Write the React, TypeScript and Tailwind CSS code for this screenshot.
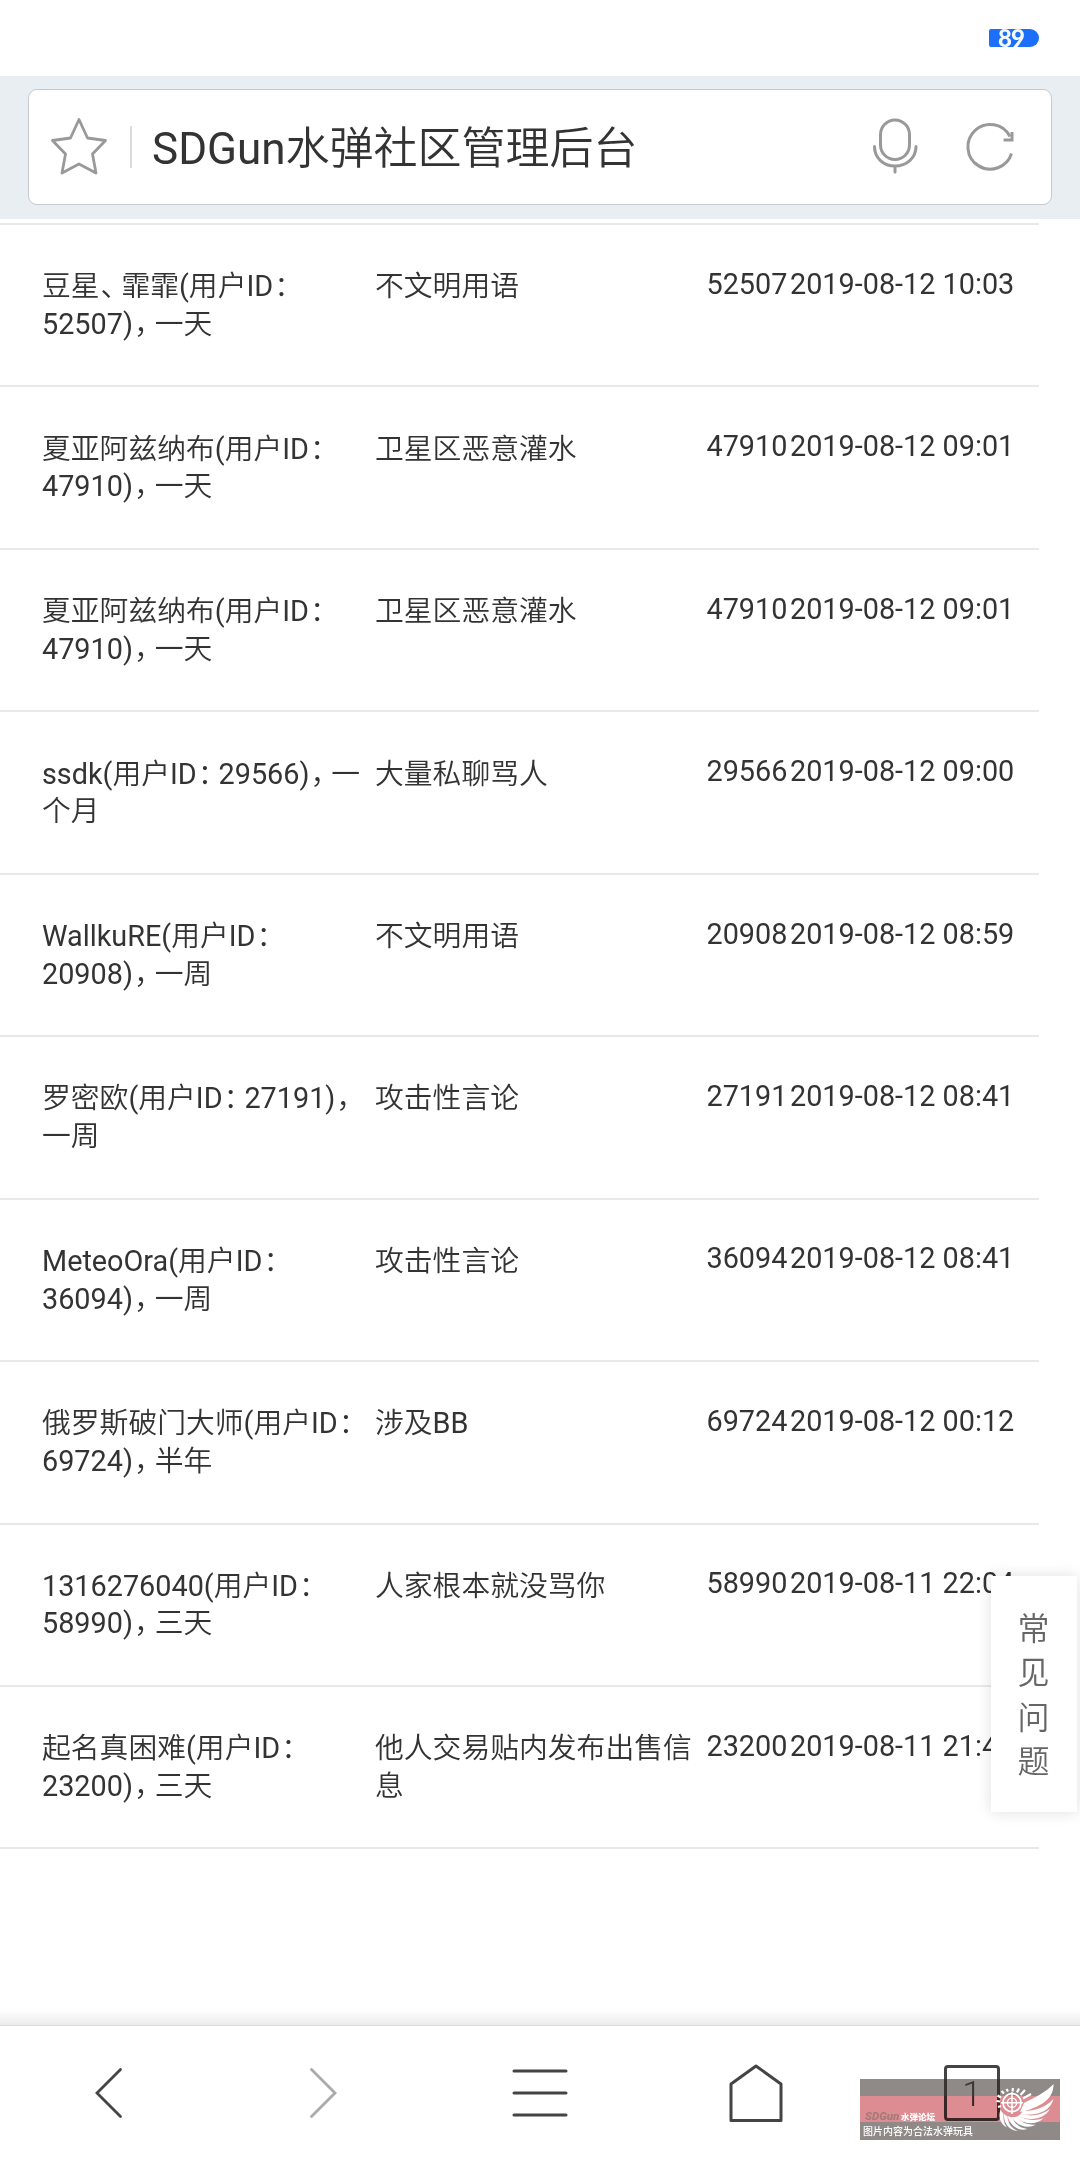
import type { ReactNode } from "react";

// =====================================================
// Ban log page inside a mobile browser shell
// =====================================================

type LogRow = {
  user: string[];
  reason: string[];
  uid: string;
  time: string;
};

const rows: LogRow[] = [
  { user: ["豆星、霏霏(用户ID：", "52507)，一天"], reason: ["不文明用语"], uid: "52507", time: "2019-08-12 10:03" },
  { user: ["夏亚阿兹纳布(用户ID：", "47910)，一天"], reason: ["卫星区恶意灌水"], uid: "47910", time: "2019-08-12 09:01" },
  { user: ["夏亚阿兹纳布(用户ID：", "47910)，一天"], reason: ["卫星区恶意灌水"], uid: "47910", time: "2019-08-12 09:01" },
  { user: ["ssdk(用户ID：29566)，一", "个月"], reason: ["大量私聊骂人"], uid: "29566", time: "2019-08-12 09:00" },
  { user: ["WallkuRE(用户ID：", "20908)，一周"], reason: ["不文明用语"], uid: "20908", time: "2019-08-12 08:59" },
  { user: ["罗密欧(用户ID：27191)，", "一周"], reason: ["攻击性言论"], uid: "27191", time: "2019-08-12 08:41" },
  { user: ["MeteoOra(用户ID：", "36094)，一周"], reason: ["攻击性言论"], uid: "36094", time: "2019-08-12 08:41" },
  { user: ["俄罗斯破门大师(用户ID：", "69724)，半年"], reason: ["涉及BB"], uid: "69724", time: "2019-08-12 00:12" },
  { user: ["1316276040(用户ID：", "58990)，三天"], reason: ["人家根本就没骂你"], uid: "58990", time: "2019-08-11 22:04" },
  { user: ["起名真困难(用户ID：", "23200)，三天"], reason: ["他人交易贴内发布出售信", "息"], uid: "23200", time: "2019-08-11 21:47" },
];

// Full-width punctuation is set tighter than the glyph's em box
function renderLine(line: string): ReactNode[] {
  return line.split(/([：，、])/).map((part, i) =>
    /^[：，、]$/.test(part) ? (
      <span key={i} className="pl-[1px] tracking-[-8px]">
        {part}
      </span>
    ) : (
      part
    )
  );
}

function StatusBar() {
  return (
    <div className="flex h-[76px] shrink-0 justify-end pt-[29px] pr-[41px]">
      <div className="flex h-[18px] w-[50px] items-center rounded-l-[2px] rounded-r-[9px] bg-[#1b6ff8] pl-[9px] font-[Lato] text-[24px] leading-[28px] font-black tracking-[-1px] text-[#f4f8ff]">
        89
      </div>
    </div>
  );
}

function AddressBar() {
  return (
    <header className="h-[143px] shrink-0 bg-[#e9eef3] px-7 pt-[13px]">
      <div className="flex h-[116px] items-center rounded-[9px] border border-[#c6c9cd] bg-white">
        <svg className="ml-[21px] h-[60px] w-[60px]" viewBox="0 0 60 60" fill="none" stroke="#999" strokeWidth="2.8" strokeLinejoin="round">
          <path d="M29 2.5 L37.5 21 L55.5 23.5 L42.5 37 L46 56 L29 47 L12 56 L15.5 37 L2.5 23.5 L20.5 21 Z" />
        </svg>
        <div className="ml-5 h-[42px] w-[2px] bg-[#dcdcdc]" />
        <h1 className="mt-[3px] ml-[20px] flex-1 text-[44px] leading-[60px] text-[#333]">SDGun水弹社区管理后台</h1>
        <svg className="mr-[44px] h-[60px] w-[50px]" viewBox="0 0 50 60" fill="none" stroke="#999" strokeWidth="3" strokeLinecap="round">
          <rect x="9.5" y="3" width="29" height="39.5" rx="14.5" />
          <path d="M3.5 29.5 C3.5 41 12.5 49 24 49 C35.5 49 45 41 45 29.5 M24 49 V55" />
        </svg>
        <svg className="mr-[32px] h-[60px] w-[54px]" viewBox="0 0 54 60" fill="none" stroke="#999" strokeWidth="3">
          <path d="M46.5 36.5 A22.3 22.3 0 1 1 45 19.5" />
          <path d="M38.5 23 H47 V15" />
        </svg>
      </div>
    </header>
  );
}

function LogTable() {
  return (
    <main className="w-[1039px] flex-1 pt-1">
      <div className="h-[2px] bg-[#e9e9e9]" />
      {rows.map((row, i) => (
        <div
          key={i}
          className="grid h-[162.45px] grid-cols-[333px_331.5px_83.5px_1fr] border-b-2 border-[#e9e9e9] pt-[43.3px] pl-[42px] text-[28.8px] leading-[37.6px] whitespace-nowrap text-[#333]"
        >
          <div>
            {row.user.map((line) => (
              <div key={line}>{renderLine(line)}</div>
            ))}
          </div>
          <div>
            {row.reason.map((line) => (
              <div key={line}>{line}</div>
            ))}
          </div>
          <div className="-mt-[2.5px]">{row.uid}</div>
          <div className="-mt-[2.5px]">{row.time}</div>
        </div>
      ))}
    </main>
  );
}

// Floating help tab pinned to the right edge
function FaqTab() {
  return (
    <button
      type="button"
      className="absolute top-[1576px] right-[3px] flex h-[236px] w-[86px] flex-col items-center justify-center bg-white pt-[3px] pr-[1px] text-[32px] leading-[44.5px] text-[#666] shadow-[0_0_14px_rgba(0,0,0,0.13)]"
    >
      {["常", "见", "问", "题"].map((ch) => (
        <span key={ch}>{ch}</span>
      ))}
    </button>
  );
}

function Watermark() {
  return (
    <div className="absolute top-[2079px] left-[860px] h-[61px] w-[200px]">
      <div className="h-[17px] bg-[rgba(51,41,38,0.55)]" />
      <div className="h-[26px] bg-[#dd8d92] mix-blend-multiply" />
      <div className="h-[18px] bg-[rgba(51,41,38,0.55)]" />
      <div className="absolute top-[31px] left-[5px] flex items-center leading-[12px] whitespace-nowrap">
        <span className="w-[36px] text-[11.5px] font-black text-[#a57a78] italic">SDGun</span>
        <span className="font-['Noto_Sans_CJK_SC'] text-[8.5px] font-black text-white">水弹论坛</span>
      </div>
      <div className="absolute top-[45px] left-[3px] font-['Noto_Sans_CJK_SC'] text-[10px] leading-[13px] font-medium whitespace-nowrap text-white">
        图片内容为合法水弹玩具
      </div>
      <svg className="absolute top-0 left-[134px] h-[61px] w-[66px]" viewBox="0 0 66 61" fill="#fff">
        {/* wing feathers */}
        <path d="M59.5 5 C52 13 40 19 30 24 L26 33 L31 32 C48 27 60 19 59.5 5 Z" />
        <path d="M59.5 20 C52 28 42 32 29 32 L26 35.5 C42 37 56 33 59.5 20 Z" />
        <path d="M56 30 C48 36 38 38 27 35 L24 37 C36 42.5 50 40.5 56 30 Z" />
        <path d="M49.5 39 C41 42.5 33 41 25 37 L21 38 C30 45.5 42 47 49.5 39 Z" />
        <path d="M42 45.5 C34 46.5 27 43 22 38 L17.5 38 C23 46.5 33 50.5 42 45.5 Z" />
        <path d="M33.5 50 C26 49.5 21 45 18 38.5 L13.5 37 C16 46 24 53 33.5 50 Z" />
        <path d="M24 52 C18 49.5 14 45 13.5 37.5 L10 35 C9.5 43 14 51.5 24 52 Z" />
        <path d="M13 48.5 C9.5 44 9 39.5 9.5 35 L6.5 31 C4 37 6 45 13 48.5 Z" />
        {/* crosshair */}
        <circle cx="18" cy="23.7" r="9" fill="none" stroke="#fff" strokeWidth="1.8" />
        <circle cx="18" cy="23.7" r="4.6" fill="none" stroke="#fff" strokeWidth="1.4" />
        <path d="M7 23.7 H29 M18 13 V35" stroke="#fff" strokeWidth="1.5" />
        {/* spikes fanning round the upper half */}
        <path
          d="M4 28 L7 27 M2.5 22 L6 22.5 M3.5 16.5 L7 18.5 M7.5 12 L10 14.5 M12.5 10 L14 12.5 M19 9 L18.5 12.5 M25 9.5 L23 13.5 M31 11 L26.5 16 M37 15 L29 19.5"
          fill="none"
          stroke="#fff"
          strokeWidth="2.2"
        />
      </svg>
    </div>
  );
}

function BottomNav() {
  return (
    <nav className="flex h-[134px] shrink-0 items-center bg-white text-[#444]">
      <div className="flex flex-1 justify-center">
        <svg className="h-[60px] w-[60px]" viewBox="0 0 60 60" fill="none" stroke="currentColor" strokeWidth="2.8" strokeLinecap="round">
          <path d="M42.5 6.5 L19 30 L42.5 53.5" />
        </svg>
      </div>
      <div className="flex flex-1 justify-center text-[#aaa]">
        <svg className="h-[60px] w-[60px]" viewBox="0 0 60 60" fill="none" stroke="currentColor" strokeWidth="2.8" strokeLinecap="round">
          <path d="M17.5 6.5 L41 30 L17.5 53.5" />
        </svg>
      </div>
      <div className="flex flex-1 justify-center">
        <svg className="h-[60px] w-[60px]" viewBox="0 0 60 60" fill="none" stroke="currentColor" strokeWidth="3" strokeLinecap="round">
          <path d="M4 8 H56 M4 30 H56 M4 52 H56" />
        </svg>
      </div>
      <div className="flex flex-1 justify-center">
        <svg className="h-[60px] w-[60px]" viewBox="0 0 60 60" fill="none" stroke="currentColor" strokeWidth="3" strokeLinejoin="round">
          <path d="M30 3 L55 21 V57.5 H5 V21 Z" />
        </svg>
      </div>
      <div className="flex flex-1 justify-center">
        <div className="flex h-[56px] w-[56px] items-center justify-center rounded-[4px] border-3 border-[#444] pt-[2px] text-[35px] leading-none font-light">1</div>
      </div>
    </nav>
  );
}

export default function App() {
  return (
    <div className="relative flex h-[2160px] w-[1080px] flex-col overflow-hidden bg-white font-[Roboto,'Noto_Sans_CJK_SC_DemiLight','Noto_Sans_CJK_SC_Light','Noto_Sans_CJK_SC',sans-serif]">
      <StatusBar />
      <AddressBar />
      <LogTable />
      <div className="h-[16px] shrink-0 border-b border-[#dcdcdc] bg-linear-to-b from-white to-[#ebebeb]" />
      <BottomNav />
      <FaqTab />
      <Watermark />
    </div>
  );
}
